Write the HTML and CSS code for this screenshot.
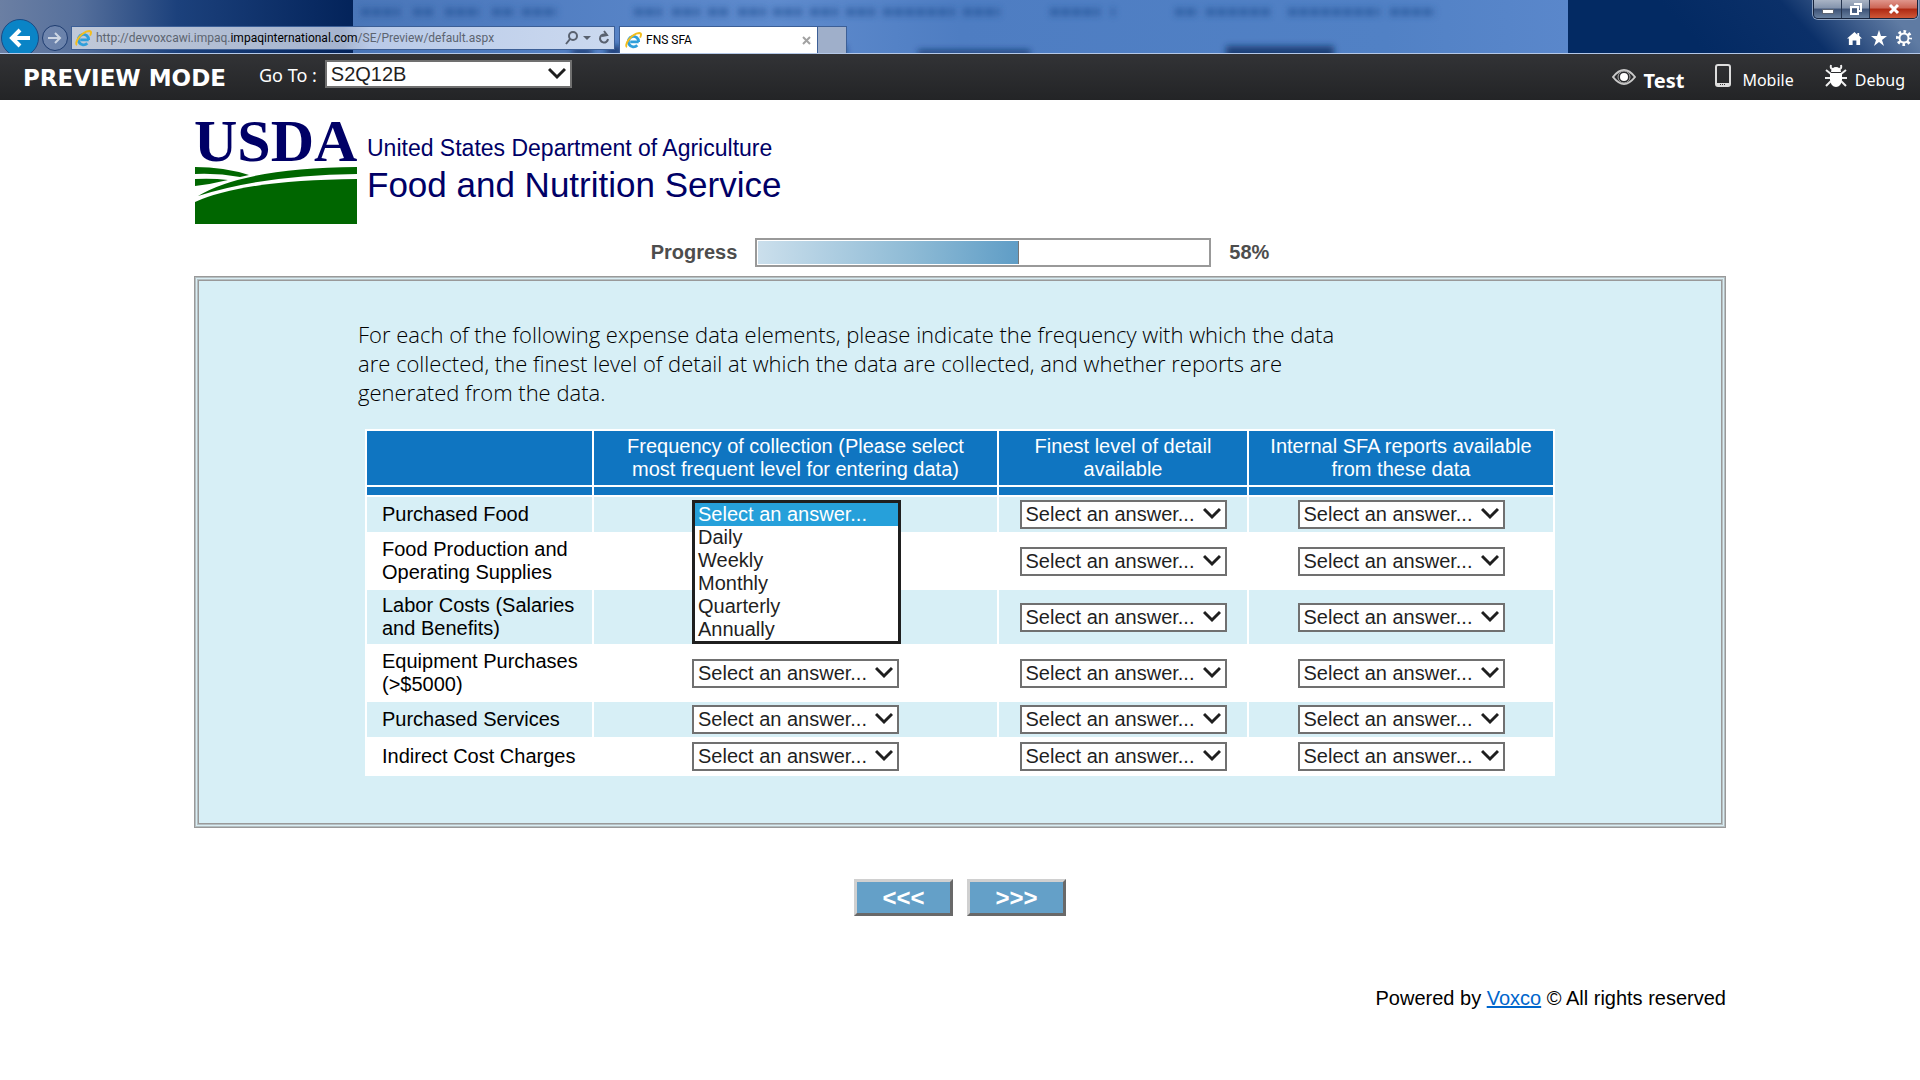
FILE: index.html
```html
<!DOCTYPE html>
<html lang="en">
<head>
<meta charset="utf-8">
<title>FNS SFA</title>
<link rel="stylesheet" href="styles.css">
</head>
<body>
<header class="browser">
  <svg class="glass" viewBox="0 0 1920 53" preserveAspectRatio="none" aria-hidden="true">
    <defs>
      <filter id="soft" filterUnits="userSpaceOnUse" x="300" y="-10" width="1300" height="80"><feGaussianBlur stdDeviation="3"/></filter>
      <linearGradient id="left" x1="0" x2="1"><stop offset="0" stop-color="#6b7fa3"/><stop offset=".22" stop-color="#56709c"/><stop offset=".5" stop-color="#1c417c"/><stop offset="1" stop-color="#03235a"/></linearGradient>
      <linearGradient id="mid" x1="0" x2="1"><stop offset="0" stop-color="#4a76b8"/><stop offset=".12" stop-color="#4f7cc0"/><stop offset=".35" stop-color="#5f8bcd"/><stop offset=".5" stop-color="#4e7dc2"/><stop offset=".85" stop-color="#5181c5"/><stop offset="1" stop-color="#5a87cb"/></linearGradient>
      <linearGradient id="right" gradientUnits="userSpaceOnUse" x1="1740" y1="90" x2="1860" y2="-20"><stop offset="0" stop-color="#032a63"/><stop offset=".55" stop-color="#0b3069"/><stop offset=".8" stop-color="#3d5c8b"/><stop offset="1" stop-color="#5f7ba3"/></linearGradient>
    </defs>
    <rect width="354" height="53" fill="url(#left)"/>
    <rect x="1567" width="353" height="53" fill="url(#right)"/>
    <rect x="353" width="1215" height="53" fill="url(#mid)"/>
    <g filter="url(#soft)" stroke="#234f92" stroke-width="8" opacity=".6">
      <path d="M361 12H400M413 12H435M445 12H480M492 12H515M522 12H557" stroke-dasharray="9 2"/>
      <path d="M634 12H662M672 12H700M708 12H730M738 12H766M773 12H802M810 12H838M846 12H875M883 12H955M963 12H1000M1050 12H1100M1111 12H1115M1175 12H1198M1206 12H1270M1288 12H1380M1390 12H1435" stroke-dasharray="9 2"/>
    </g>
    <g filter="url(#soft)" fill="#0f2f66">
      <path d="M572 48H592V56H572ZM606 46H622V56H606ZM826 46H846V56H826ZM918 50H1030V56H918ZM1226 46H1334V60H1226Z" opacity=".8"/>
    </g>
  </svg>
  <div class="nav">
    <button class="back" aria-label="Back"><svg width="22" height="20" viewBox="0 0 22 20"><path d="M21 10H3M11 2L3 10l8 8" fill="none" stroke="#fff" stroke-width="4"/></svg></button>
    <button class="forward" aria-label="Forward"><svg width="14" height="14" viewBox="0 0 14 14"><path d="M0 7h12M7 2l5 5-5 5" fill="none" stroke="#cdd6e4" stroke-width="2"/></svg></button>
    <div class="address">
      <svg width="17" height="17" viewBox="0 0 18 18"><path d="M14.500 10.500H5.500M14.500 10.500A5.500 5.500 0 1 0 13 14" fill="none" stroke="#2f9fdb" stroke-width="3"/><path d="M2 16C-1 14 6 2 15 1c3 0 2 3 1 5" fill="none" stroke="#f3bd1d" stroke-width="2"/></svg>
      <span class="url">http://devvoxcawi.impaq.<b>impaqinternational.com</b>/SE/Preview/default.aspx</span>
      <svg width="46" height="16" viewBox="0 0 46 16"><g fill="none" stroke="#59616f" stroke-width="2"><circle cx="9" cy="6" r="4"/><path d="M6 9l-4 5M42 5a4 4 0 1 0 2 4M40 1l3 4-5 1"/></g><path d="M19 6h8l-4 4z" fill="#59616f"/></svg>
    </div>
    <div class="tab">
      <svg width="17" height="17" viewBox="0 0 18 18"><path d="M14.500 10.500H5.500M14.500 10.500A5.500 5.500 0 1 0 13 14" fill="none" stroke="#2f9fdb" stroke-width="3"/><path d="M2 16C-1 14 6 2 15 1c3 0 2 3 1 5" fill="none" stroke="#f3bd1d" stroke-width="2"/></svg>
      <span class="tabname">FNS SFA</span>
      <svg width="9" height="9" viewBox="0 0 9 9"><path d="M1 1l7 7M8 1L1 8" stroke="#a2a2a2" stroke-width="2"/></svg>
    </div>
    <button class="newtab" aria-label="New tab"></button>
  </div>
  <div class="window">
    <div class="controls">
      <button aria-label="Minimize"><svg width="14" height="12" viewBox="0 0 14 12"><rect x="1.500" y="6.500" width="11" height="4" fill="#fff" stroke="#5a6372"/></svg></button>
      <button aria-label="Restore"><svg width="14" height="12" viewBox="0 0 14 12"><path d="M5 1h7v7h-3M2 4h7v7H2z" fill="none" stroke="#fff" stroke-width="2"/></svg></button>
      <button class="close" aria-label="Close"><svg width="14" height="12" viewBox="0 0 14 12"><path d="M3 2l8 8M11 2l-8 8" stroke="#fff" stroke-width="3"/></svg></button>
    </div>
    <div class="tools">
      <svg width="15" height="15" viewBox="0 0 16 16"><path d="M8 1L0 8h2v7h4v-5h4v5h4V8h2l-3-3V2h-2v2z" fill="#fff"/></svg>
      <svg width="16" height="16" viewBox="0 0 16 16"><path d="M8 0l2 6h6l-5 4 2 6-5-4-5 4 2-6-5-4h6z" fill="#fff"/></svg>
      <svg width="16" height="16" viewBox="0 0 16 16"><circle cx="8" cy="8" r="4.500" fill="none" stroke="#fff" stroke-width="2"/><circle cx="8" cy="8" r="6.500" fill="none" stroke="#fff" stroke-width="3" stroke-dasharray="2.600 2.505" stroke-dashoffset="1.300"/></svg>
    </div>
  </div>
</header>

<div class="preview">
  <h1>PREVIEW MODE</h1>
  <label for="goto">Go To :</label>
  <select id="goto" class="goto"><option>S2Q12B</option></select>
  <nav class="modes">
    <a href="#test" class="mode active"><svg width="24" height="24" viewBox="0 -4 24 24"><path d="M1 9Q12-5 23 9 12 23 1 9z" fill="none" stroke="#c9c9c9" stroke-width="2"/><circle cx="12" cy="9" r="6" fill="none" stroke="#aaa"/><circle cx="12" cy="9" r="4" fill="#fff"/></svg>Test</a>
    <a href="#mobile" class="mode"><svg width="19" height="24" viewBox="0 0 19 24"><rect x="1" y="1" width="14" height="21" rx="2" fill="none" stroke="#ddd" stroke-width="2"/><path d="M2 19h12v3H2z" fill="#ddd"/><path d="M5 20.500h6" stroke="#333" stroke-dasharray="1 1"/></svg>Mobile</a>
    <a href="#debug" class="mode"><svg width="22" height="24" viewBox="0 0 22 24"><path d="M6 1q-1 4 2 4M16 1q1 4-2 4M1 6l5 4M21 6l-5 4M0 14h22M1 22l5-5M21 22l-5-5" fill="none" stroke="#eee" stroke-width="2"/><path d="M6 8a5 5 0 0 1 10 0z" fill="#fff"/><path d="M5 9h12v7q-1 7-6 7t-6-7z" fill="#fff"/></svg>Debug</a>
  </nav>
</div>

<main class="survey">
  <div class="brand">
    <svg class="usda" width="164" height="116" viewBox="0 0 164 116" role="img" aria-label="USDA">
      <text x="0" y="49" class="usdatext">USDA</text>
      <path d="M1 55Q30 55 55 63L46 65Q24 61 1 62z" fill="#060"/>
      <path d="M1 67Q18 66 34 68 18 72 1 74z" fill="#060"/>
      <path d="M4 84Q50 56 163 55V62Q70 63 4 84z" fill="#060"/>
      <path d="M1 90Q50 68 163 67V112H1z" fill="#060"/>
    </svg>
    <div class="agency">
      <div class="dept">United States Department of Agriculture</div>
      <div class="service">Food and Nutrition Service</div>
    </div>
  </div>

  <div class="progress">
    <span>Progress</span>
    <div class="track" role="progressbar" aria-valuenow="58" aria-valuemin="0" aria-valuemax="100" aria-label="Progress"><div class="fill" style="width:58%"></div></div>
    <span>58%</span>
  </div>

  <section class="panel">
    <p class="question">For each of the following expense data elements, please indicate the frequency with which the data<br>are collected, the finest level of detail at which the data are collected, and whether reports are<br>generated from the data.</p>
    <table class="grid">
      <colgroup><col class="c1"><col class="c2"><col class="c3"><col class="c4"></colgroup>
      <thead>
        <tr><th></th><th scope="col">Frequency of collection (Please select<br>most frequent level for entering data)</th><th scope="col">Finest level of detail<br>available</th><th scope="col">Internal SFA reports available<br>from these data</th></tr>
        <tr class="band"><td></td><td></td><td></td><td></td></tr>
      </thead>
      <tbody>
        <tr><th scope="row">Purchased Food</th><td><div class="open"><select class="pick" aria-label="Purchased Food, frequency"><option>Select an answer...</option></select><select class="list" size="6" aria-label="Purchased Food, frequency choices"><option class="current">Select an answer...</option><option>Daily</option><option>Weekly</option><option>Monthly</option><option>Quarterly</option><option>Annually</option></select></div></td><td><select class="pick" aria-label="Purchased Food, detail"><option>Select an answer...</option></select></td><td><select class="pick" aria-label="Purchased Food, reports"><option>Select an answer...</option></select></td></tr>
        <tr><th scope="row">Food Production and<br>Operating Supplies</th><td></td><td><select class="pick" aria-label="Supplies, detail"><option>Select an answer...</option></select></td><td><select class="pick" aria-label="Supplies, reports"><option>Select an answer...</option></select></td></tr>
        <tr><th scope="row">Labor Costs (Salaries<br>and Benefits)</th><td></td><td><select class="pick" aria-label="Labor, detail"><option>Select an answer...</option></select></td><td><select class="pick" aria-label="Labor, reports"><option>Select an answer...</option></select></td></tr>
        <tr><th scope="row">Equipment Purchases<br>(&gt;$5000)</th><td><select class="pick" aria-label="Equipment, frequency"><option>Select an answer...</option></select></td><td><select class="pick" aria-label="Equipment, detail"><option>Select an answer...</option></select></td><td><select class="pick" aria-label="Equipment, reports"><option>Select an answer...</option></select></td></tr>
        <tr><th scope="row">Purchased Services</th><td><select class="pick" aria-label="Services, frequency"><option>Select an answer...</option></select></td><td><select class="pick" aria-label="Services, detail"><option>Select an answer...</option></select></td><td><select class="pick" aria-label="Services, reports"><option>Select an answer...</option></select></td></tr>
        <tr><th scope="row">Indirect Cost Charges</th><td><select class="pick" aria-label="Indirect, frequency"><option>Select an answer...</option></select></td><td><select class="pick" aria-label="Indirect, detail"><option>Select an answer...</option></select></td><td><select class="pick" aria-label="Indirect, reports"><option>Select an answer...</option></select></td></tr>
      </tbody>
    </table>
  </section>

  <div class="pager"><button class="step">&lt;&lt;&lt;</button><button class="step">&gt;&gt;&gt;</button></div>
  <footer class="foot">Powered by <a href="#voxco">Voxco</a> © All rights reserved</footer>
</main>
</body>
</html>
```
FILE: styles.css
```css
* { box-sizing: border-box; }
body { margin: 0; background: #fff; color: #000; font: 20px/23px "Liberation Sans", Arial, sans-serif; }
button, select { font-family: inherit; margin: 0; border-radius: 0; }
svg { flex: none; }

/* Browser frame */
.browser { position: relative; display: flex; justify-content: space-between; height: 54px; border-bottom: 1px solid #b4c8e8; overflow: hidden; background: #03235a; }
.glass { position: absolute; inset: 0; width: 100%; height: 100%; }
.nav { position: relative; display: flex; align-items: flex-start; padding: 19px 0 0 1px; }
.back { display: flex; align-items: center; justify-content: center; width: 38px; height: 38px; padding: 0; border: 1px solid #1c4a84; border-radius: 50%; background: #0a84c6; }
.forward { display: flex; align-items: center; justify-content: center; width: 26px; height: 26px; margin: 6px 3px 0 3px; padding: 0; border: 1px solid #1e3c70; border-radius: 50%; background: rgba(150, 170, 205, .3); }
.address { display: flex; align-items: center; gap: 4px; width: 544px; height: 24px; margin: 7px 4px 0 0; padding: 0 4px 0 3px; border: 1px solid #3c5f97; background: linear-gradient(90deg, #c0c9d9, #a5b4cf 50%, #b9cae8 55%, #cbd9ef); }
.url { flex: 1; color: #5c6470; font: 12px/20px Roboto, sans-serif; white-space: nowrap; }
.url b { font-weight: 400; color: #000; }
.tab { display: flex; align-items: center; gap: 4px; width: 199px; height: 28px; margin-top: 7px; padding: 0 6px 0 5px; border: 1px solid #3c5f97; background: #fff; }
.tabname { flex: 1; font: 12px/20px Roboto, sans-serif; }
.newtab { width: 29px; height: 28px; margin-top: 7px; padding: 0; border: 1px solid #3c5f97; border-left: 0; background: #9fafca; }
.window { position: relative; display: flex; flex-direction: column; align-items: flex-end; gap: 11px; padding-right: 2px; }
.controls { display: flex; height: 19px; border: 1px solid #16233c; border-top: 0; border-radius: 0 0 5px 5px; overflow: hidden; box-shadow: 0 0 0 1px #8da3c2; }
.controls button { display: flex; align-items: center; justify-content: center; width: 28px; padding: 0; border: 0; border-right: 1px solid #25344e; background: linear-gradient(#a9b4c5, #8393ac 45%, #3c5175 50%, #68809f); }
.controls .close { width: 47px; border: 0; background: linear-gradient(#e0968c, #cc6454 45%, #ae2812 50%, #cf5838); }
.tools { display: flex; align-items: center; gap: 9px; padding-right: 6px; }

/* Preview bar */
.preview { display: flex; align-items: flex-start; height: 46px; padding: 6px 15px 0 23px; color: #fff; background: linear-gradient(#323336, #232426); font: 16px/24px "Noto Sans", sans-serif; }
.preview h1 { margin: 3px 33px 0 0; font: bold 23px/30px "DejaVu Sans", sans-serif; }
.preview label { margin-right: 8px; padding-top: 3px; font-size: 18px; }
.goto, .pick { appearance: none; border: 2px solid #707070; color: #1f1f1f; background: #fff url("data:image/svg+xml,%3Csvg xmlns='http://www.w3.org/2000/svg' width='18' height='13'%3E%3Cpath d='M1 2l8 8 8-8' fill='none' stroke='%231f1f1f' stroke-width='3'/%3E%3C/svg%3E") no-repeat right 4px top 5px; font: 20px/23px "Liberation Sans", Arial, sans-serif; padding: 0 24px 0 4px; }
.goto { width: 247px; height: 28px; }
.modes { display: flex; gap: 31px; margin-left: auto; }
.mode { display: flex; align-items: flex-start; gap: 8px; padding-top: 4px; color: #fff; text-decoration: none; line-height: 33px; }
.mode.active { font-size: 20px; font-weight: bold; }

/* Survey page */
.survey { margin: 0 194px; }
.brand { display: flex; gap: 9px; padding-top: 12px; }
.usda { overflow: visible; }
.usdatext { fill: #006; font: bold 60px "Liberation Serif", serif; }
.agency { padding-top: 22px; color: #006; white-space: nowrap; }
.dept { font-size: 23px; line-height: 28px; }
.service { font-size: 35px; line-height: 46px; }
.progress { display: flex; justify-content: center; align-items: center; gap: 18px; margin-top: 10px; color: #4d4d4d; font-weight: bold; }
.track { width: 456px; height: 29px; padding: 1px; border: 2px solid #999; background: #fff; }
.fill { height: 23px; border-right: 1px solid #777; background: linear-gradient(90deg, #cbdfec, #8dbad5 60%, #5f9dc6); }
.panel { margin-top: 9px; padding: 43px 159px 51px; border: 1px solid #999; background: #d7eff6; box-shadow: inset 0 0 0 1px #b5bfc2, inset 0 0 0 2px #d9edf3, inset 0 0 0 3px #b5bfc2, inset 0 0 0 4px #999; }
.question { margin: 0 0 22px 4px; font: 300 22px/29px "Open Sans", sans-serif; }
.grid { width: 1190px; margin: 0 auto; border-collapse: separate; border-spacing: 2px; table-layout: fixed; background: #fff; }
.c1 { width: 225px; } .c2 { width: 403px; } .c3 { width: 248px; } .c4 { width: 304px; }
.grid th, .grid td { padding: 3px 0; font-weight: 400; text-align: center; }
.grid thead th, .grid .band td { padding: 4px 0; color: #fff; background: #0f75c1; }
.grid tbody th { padding: 4px 0 4px 15px; text-align: left; }
.grid tbody tr:nth-child(odd) > * { background: #d7eff6; }
.pick { display: block; width: 207px; height: 29px; margin: 0 auto; }
.open { position: relative; width: 207px; margin: 0 auto; }
.list { position: absolute; z-index: 1; left: 0; top: 0; width: 209px; height: 144px; padding: 0; border: 3px solid #1f1f1f; outline: 0; overflow: hidden; color: #1f1f1f; background: #fff; font-size: 20px; }
.list option { height: 23px; min-height: 23px; padding: 0 3px; line-height: 23px; }
.list .current { color: #fff; background: #26a0da; }
.pager { display: flex; justify-content: center; gap: 14px; margin-top: 51px; }
.step { width: 99px; height: 37px; padding: 0; border: 3px solid; border-color: #d0d0d0 #696969 #696969 #d0d0d0; color: #fff; background: #64a0c8; font-size: 24px; font-weight: bold; line-height: 29px; }
.foot { margin-top: 71px; padding-bottom: 60px; text-align: right; }
.foot a { color: #06c; }
```
